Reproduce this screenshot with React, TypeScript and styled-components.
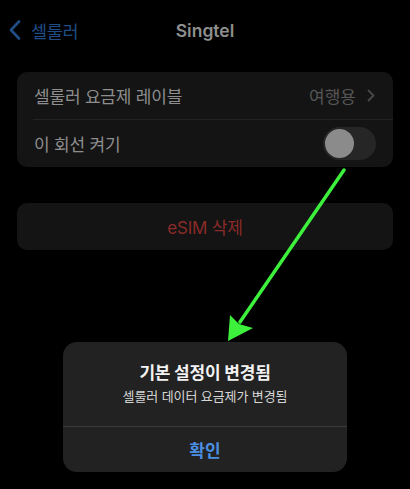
import React from "react";
import styled, { createGlobalStyle } from "styled-components";

const Global = createGlobalStyle`
  html, body { margin: 0; padding: 0; background: #000; }
  body { font-family: Inter, "Noto Sans CJK KR", sans-serif; -webkit-font-smoothing: antialiased; }
`;

const Screen = styled.div`
  position: relative;
  width: 410px;
  height: 489px;
  background: #000;
  overflow: hidden;
  font-family: Inter, "Noto Sans CJK KR", sans-serif;
`;

const Nav = styled.div`
  position: relative;
  height: 60px;
  display: flex;
  align-items: center;
  justify-content: center;
`;

const Back = styled.div`
  position: absolute;
  left: 9px;
  top: 0;
  height: 60px;
  display: flex;
  align-items: center;
  gap: 10px;
  color: #1f4d86;
  font-size: 17.5px;
  letter-spacing: -0.4px;
`;

const Title = styled.div`
  color: #8f8f8f;
  font-size: 17.5px;
  font-weight: 600;
`;

const Group = styled.div<{ $top: number }>`
  margin: ${(p) => p.$top}px 17px 0;
  background: #141414;
  border-radius: 10px;
  overflow: hidden;
`;

const Row = styled.div<{ $center?: boolean }>`
  height: 47px;
  display: flex;
  align-items: center;
  justify-content: ${(p) => (p.$center ? "center" : "space-between")};
  padding: 0 17px;
`;

const Divider = styled.div`
  height: 1px;
  margin-left: 16px;
  background: #232323;
`;

const Label = styled.div<{ $color?: string }>`
  color: ${(p) => p.$color || "#8e8e8e"};
  font-size: 17px;
  letter-spacing: -0.2px;
`;

const Value = styled.div`
  display: flex;
  align-items: center;
  gap: 11px;
  color: #565656;
  font-size: 17px;
  margin-right: 1px;
`;

const Toggle = styled.div`
  width: 53px;
  height: 33px;
  border-radius: 17px;
  background: #262626;
  display: flex;
  align-items: center;
  padding-left: 2px;
  box-sizing: border-box;
`;

const Knob = styled.div`
  width: 29px;
  height: 29px;
  border-radius: 50%;
  background: #8b8b8b;
`;

const Alert = styled.div`
  position: absolute;
  left: 63px;
  top: 342px;
  width: 284px;
  height: 130px;
  border-radius: 14px;
  background: #222;
  display: flex;
  flex-direction: column;
  overflow: hidden;
`;

const AlertBody = styled.div`
  flex: 1;
  display: flex;
  flex-direction: column;
  align-items: center;
  padding-top: 20px;
  gap: 3px;
  border-bottom: 1px solid #3a3a3a;
`;

const AlertTitle = styled.div`
  color: #f2f2f2;
  font-size: 17px;
  font-weight: 700;
  line-height: 22px;
  letter-spacing: -0.2px;
`;

const AlertMsg = styled.div`
  color: #d6d6d6;
  font-size: 13px;
  line-height: 18px;
  letter-spacing: -0.1px;
`;

const AlertButton = styled.div`
  height: 45px;
  display: flex;
  align-items: center;
  justify-content: center;
  color: #4b8fe2;
  font-size: 17px;
  font-weight: 600;
`;

const ArrowLayer = styled.svg`
  position: absolute;
  left: 0;
  top: 0;
  pointer-events: none;
`;

export default function App() {
  return (
    <Screen>
      <Global />
      <Nav>
        <Back>
          <svg width="12" height="20" viewBox="0 0 12 20">
            <path d="M10 1.5 L2 10 L10 18.5" fill="none" stroke="#1f4d86" strokeWidth="2.6" strokeLinecap="round" strokeLinejoin="round" />
          </svg>
          <span>셀룰러</span>
        </Back>
        <Title>Singtel</Title>
      </Nav>
      <Group $top={12}>
        <Row>
          <Label>셀룰러 요금제 레이블</Label>
          <Value>
            여행용
            <svg width="8" height="13" viewBox="0 0 8 13">
              <path d="M1.5 1.5 L6.5 6.5 L1.5 11.5" fill="none" stroke="#484848" strokeWidth="1.8" strokeLinecap="round" strokeLinejoin="round" />
            </svg>
          </Value>
        </Row>
        <Divider />
        <Row>
          <Label>이 회선 켜기</Label>
          <Toggle>
            <Knob />
          </Toggle>
        </Row>
      </Group>
      <Group $top={36}>
        <Row $center>
          <Label $color="#8a2b28">eSIM 삭제</Label>
        </Row>
      </Group>
      <Alert>
        <AlertBody>
          <AlertTitle>기본 설정이 변경됨</AlertTitle>
          <AlertMsg>셀룰러 데이터 요금제가 변경됨</AlertMsg>
        </AlertBody>
        <AlertButton>확인</AlertButton>
      </Alert>
      <ArrowLayer width="410" height="489" viewBox="0 0 410 489">
        <line x1="344" y1="170" x2="240" y2="322" stroke="#3cf03c" strokeWidth="3.5" strokeLinecap="round" />
        <polygon points="228,341 230,315 239,324 253,328" fill="#3cf03c" />
      </ArrowLayer>
    </Screen>
  );
}
